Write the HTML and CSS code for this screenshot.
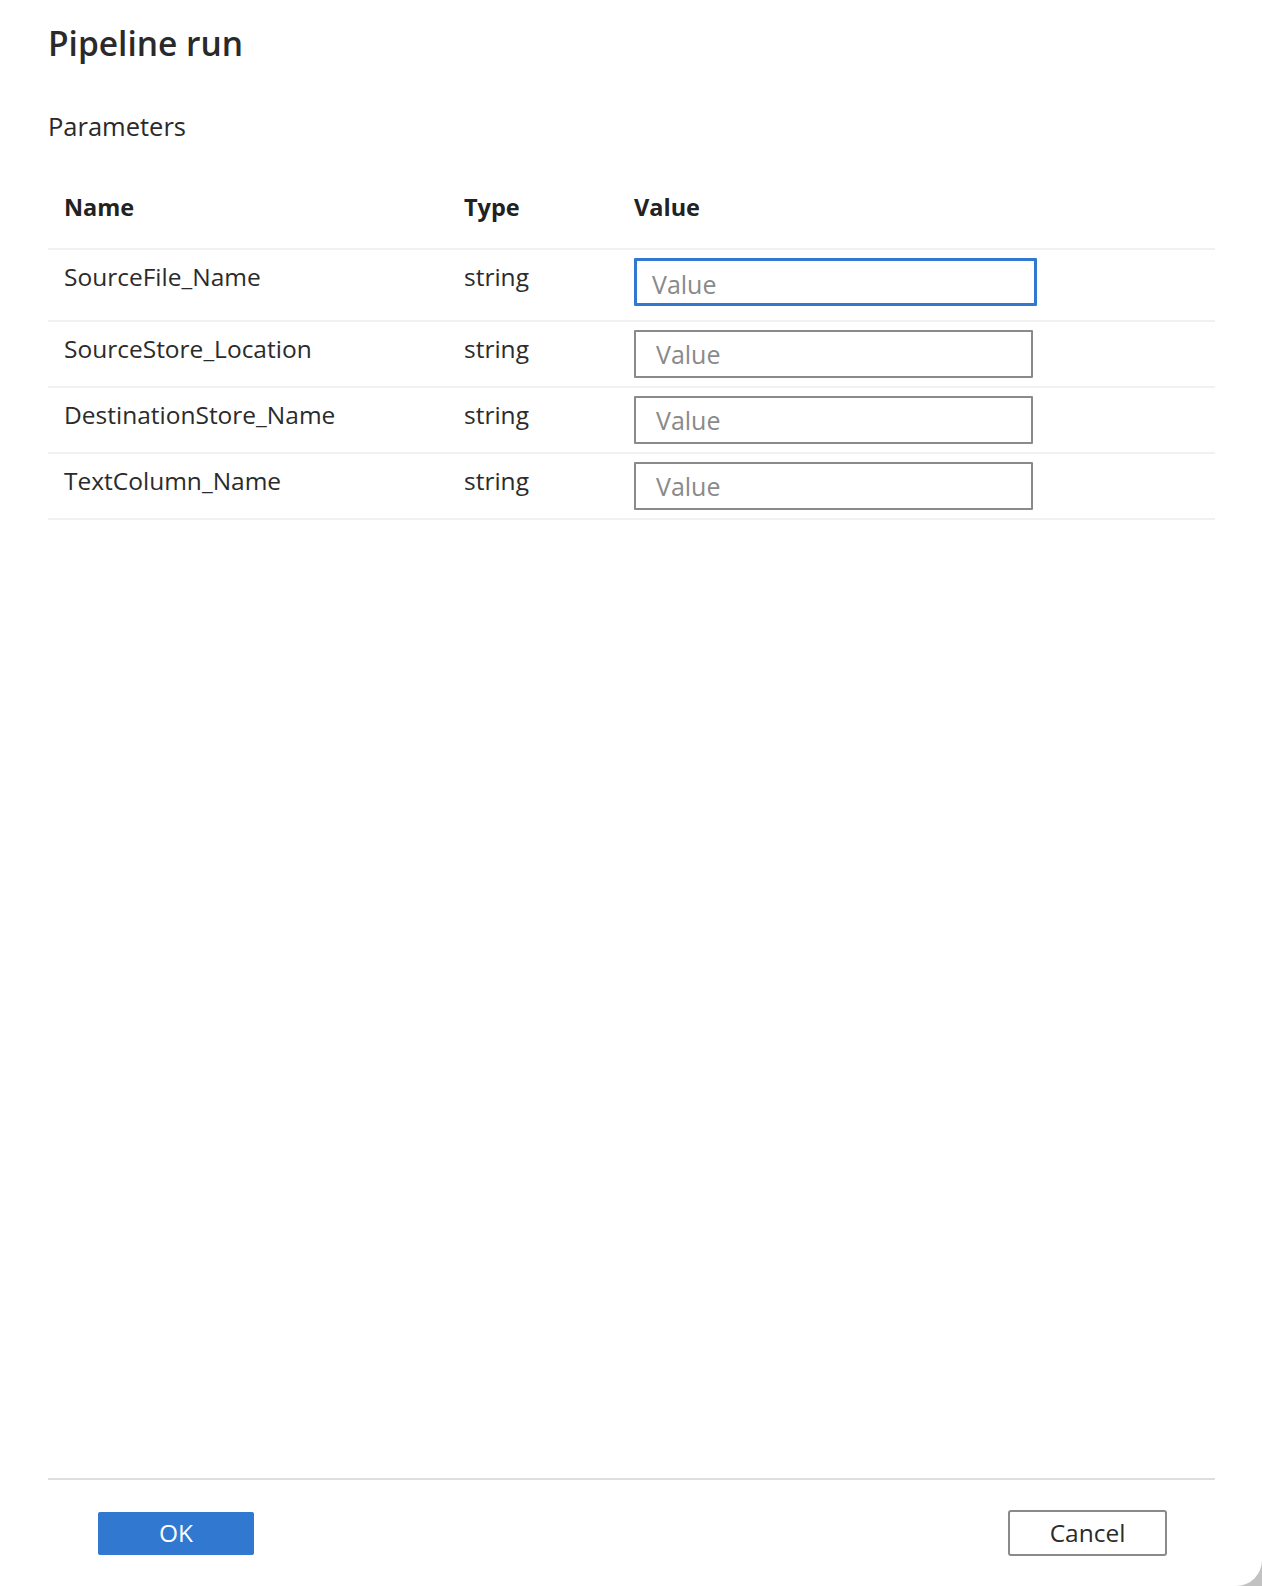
FILE: index.html
```html
<!DOCTYPE html>
<html lang="en">
<head>
<meta charset="utf-8">
<title>Pipeline run</title>
<link rel="stylesheet" href="styles.css">
</head>
<body>
<div class="dialog">
  <h1 class="title">Pipeline run</h1>
  <h2 class="section">Parameters</h2>
  <div class="params">
    <div class="row head">
      <div class="cell">Name</div>
      <div class="cell">Type</div>
      <div class="cell">Value</div>
    </div>
    <div class="row first">
      <div class="cell">SourceFile_Name</div>
      <div class="cell">string</div>
      <div class="cell input-cell"><input class="value focused" type="text" placeholder="Value"></div>
    </div>
    <div class="row">
      <div class="cell">SourceStore_Location</div>
      <div class="cell">string</div>
      <div class="cell input-cell"><input class="value" type="text" placeholder="Value"></div>
    </div>
    <div class="row">
      <div class="cell">DestinationStore_Name</div>
      <div class="cell">string</div>
      <div class="cell input-cell"><input class="value" type="text" placeholder="Value"></div>
    </div>
    <div class="row last">
      <div class="cell">TextColumn_Name</div>
      <div class="cell">string</div>
      <div class="cell input-cell"><input class="value" type="text" placeholder="Value"></div>
    </div>
  </div>
  <div class="footer">
    <button class="btn primary" type="button">OK</button>
    <button class="btn secondary" type="button">Cancel</button>
  </div>
</div>
</body>
</html>
```

FILE: styles.css
```css
html {
  background: #c2c2c2;
}
body {
  margin: 0;
  background: #ffffff;
  border-bottom-right-radius: 26px;
  font-family: "Open Sans", "Noto Sans", "Liberation Sans", sans-serif;
  color: #2b2b2b;
}
.dialog {
  box-sizing: border-box;
  height: 1586px;
  padding: 0 47px 0 48px;
  display: flex;
  flex-direction: column;
}
.title {
  margin: 21px 0 0 0;
  font-size: 33.5px;
  line-height: 44px;
  font-weight: 600;
  color: #2a2a2a;
}
.section {
  margin: 44px 0 0 0;
  font-size: 25.5px;
  line-height: 34px;
  font-weight: 400;
  color: #2a2a2a;
}
.params {
  margin-top: 48px;
  display: flex;
  flex-direction: column;
}
.row {
  display: grid;
  grid-template-columns: 400px 170px 1fr;
  align-items: start;
  border-top: 2px solid #f1f1f1;
  padding-bottom: 8px;
}
.row.head {
  border-top: none;
  padding-bottom: 25px;
}
.row.last {
  border-bottom: 2px solid #f1f1f1;
}
.cell {
  padding: 10.5px 0 0 16px;
  font-size: 24.5px;
  line-height: 32px;
}
.row.head .cell {
  padding-top: 0;
  font-size: 23.5px;
  font-weight: 700;
  color: #222;
}
.cell.input-cell {
  padding-top: 8px;
}
.value {
  display: block;
  box-sizing: border-box;
  width: 399px;
  height: 48px;
  margin: 0;
  padding: 0 0 0 20px;
  border: 2px solid #8a8a8a;
  border-radius: 1px;
  background: #fff;
  font-family: "Open Sans", "Noto Sans", "Liberation Sans", sans-serif;
  font-size: 25px;
  color: #2b2b2b;
  outline: none;
}
.value::placeholder {
  color: #8a8a8a;
}
.value.focused {
  width: 403px;
  border: 3px solid #3078d0;
  padding-left: 15px;
  padding-top: 4px;
  margin-bottom: 6px;
}
.footer {
  margin-top: auto;
  border-top: 2px solid #dedede;
  padding: 30px 48px 30px 50px;
  display: flex;
  justify-content: space-between;
  align-items: center;
}
.btn {
  font-family: "Open Sans", "Noto Sans", "Liberation Sans", sans-serif;
  font-size: 24.5px;
  line-height: 30px;
  margin: 0;
  cursor: pointer;
}
.btn.primary {
  width: 156px;
  height: 43px;
  background: #3078d0;
  color: #ffffff;
  border: none;
  border-radius: 2px;
}
.btn.secondary {
  width: 159px;
  height: 46px;
  background: #ffffff;
  color: #2b2b2b;
  border: 2px solid #8a8a8a;
  border-radius: 3px;
}
```
